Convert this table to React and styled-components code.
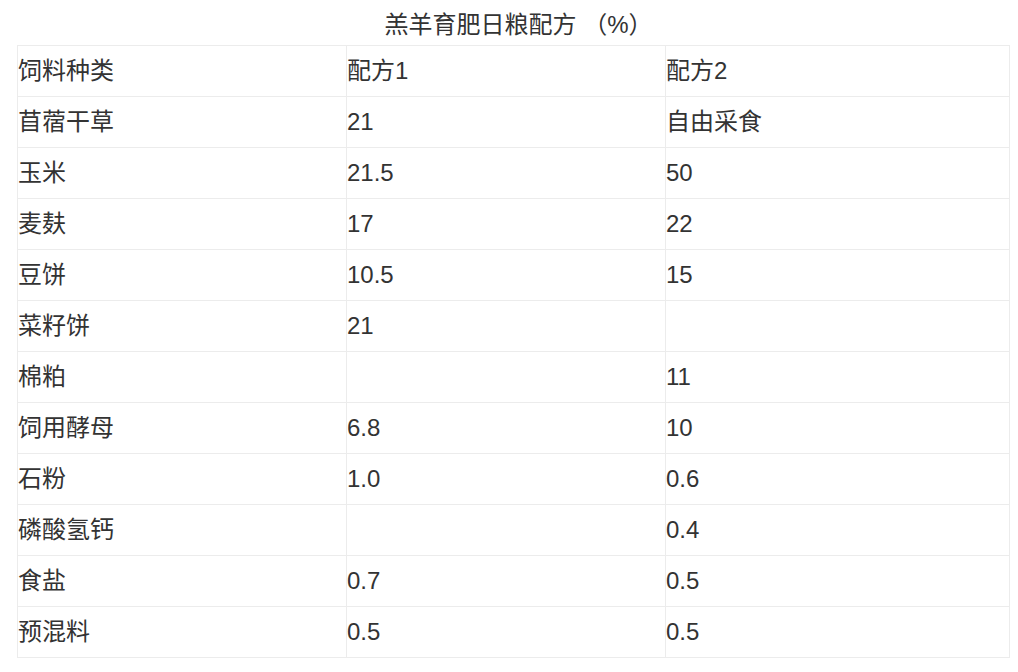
import styled, { createGlobalStyle } from 'styled-components'

const GlobalStyle = createGlobalStyle`
  body {
    margin: 0;
    background: #fff;
    font-family: "Liberation Sans", "Noto Sans CJK SC", sans-serif;
    color: #333;
  }
`;

const Wrapper = styled.div`
  padding: 0 12px 0 17px;
`;

const Title = styled.div`
  height: 45px;
  display: flex;
  align-items: center;
  justify-content: center;
  font-size: 24px;
  padding-left: 14px;
`;

const Table = styled.table`
  width: 100%;
  border-collapse: collapse;
  table-layout: fixed;
  font-size: 24px;
`;

const Cell = styled.td`
  border: 1px solid #ececec;
  height: 50px;
  padding: 0;
  vertical-align: middle;
  line-height: 1.1;
  width: ${(p) => p.$w}px;
`;

const rows = [
  ['饲料种类', '配方1', '配方2'],
  ['苜蓿干草', '21', '自由采食'],
  ['玉米', '21.5', '50'],
  ['麦麸', '17', '22'],
  ['豆饼', '10.5', '15'],
  ['菜籽饼', '21', ''],
  ['棉粕', '', '11'],
  ['饲用酵母', '6.8', '10'],
  ['石粉', '1.0', '0.6'],
  ['磷酸氢钙', '', '0.4'],
  ['食盐', '0.7', '0.5'],
  ['预混料', '0.5', '0.5'],
]

const widths = [328, 318, 343]

function App() {
  return (
    <Wrapper>
      <GlobalStyle />
      <Title>羔羊育肥日粮配方 （%）</Title>
      <Table>
        <tbody>
          {rows.map((r, i) => (
            <tr key={i}>
              {r.map((c, j) => (
                <Cell key={j} $w={widths[j]}>{c}</Cell>
              ))}
            </tr>
          ))}
        </tbody>
      </Table>
    </Wrapper>
  )
}

export default App
